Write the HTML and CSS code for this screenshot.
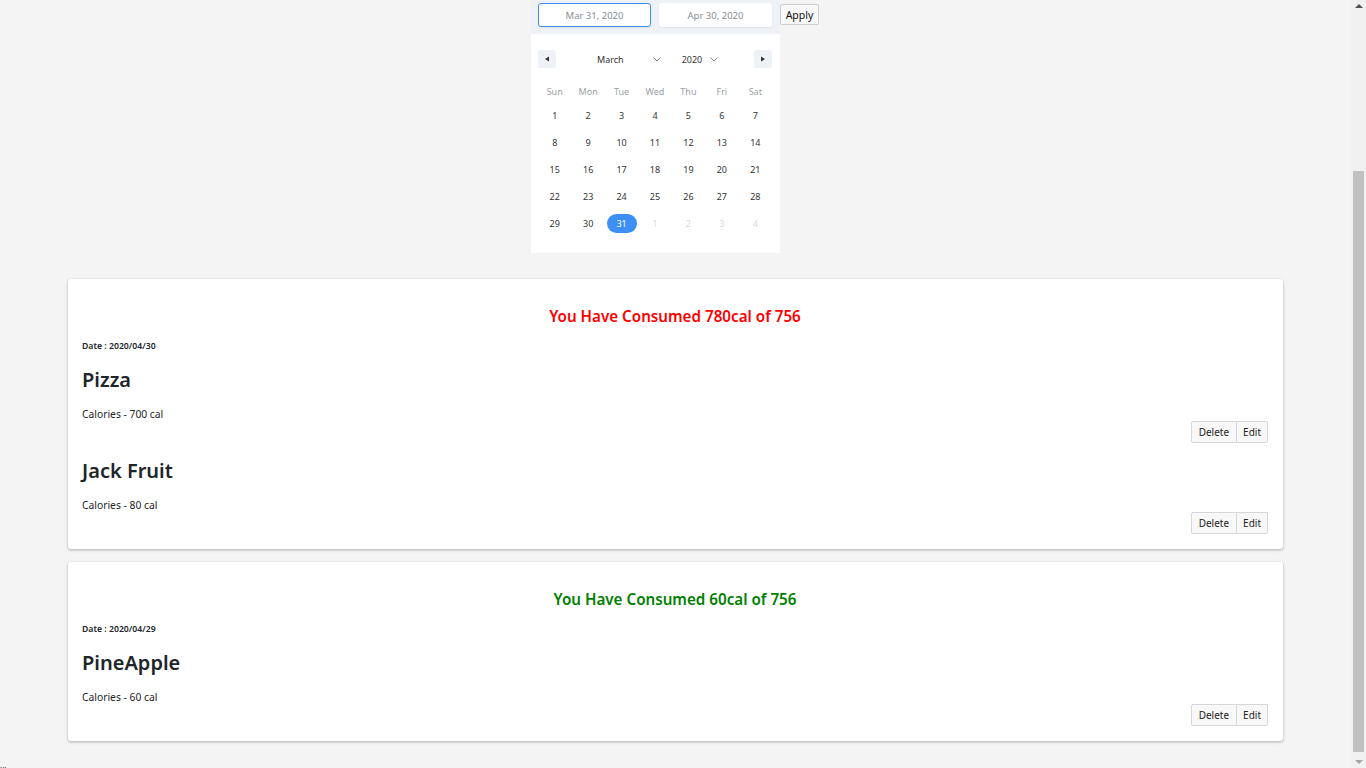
FILE: index.html
```html
<!DOCTYPE html>
<html lang="en">
<head>
<meta charset="utf-8">
<title>Calories</title>
<link rel="stylesheet" href="styles.css">
</head>
<body>
<div class="page">
  <main class="main">
    <div class="picker-row">
      <div class="picker">
        <div class="picker-inputs">
          <div class="date-input active">Mar 31, 2020</div>
          <div class="date-input">Apr 30, 2020</div>
        </div>
        <div class="calendar">
          <div class="cal-head">
            <span class="nav"><svg width="6" height="6" viewBox="0 0 6 6"><path d="M1 3L5 0.5V5.5Z" fill="#333"/></svg></span>
            <span class="sel month">March</span>
            <svg class="chev chev-m" width="8" height="5" viewBox="0 0 8 5"><path d="M0.5 0.5L4 4L7.5 0.5" fill="none" stroke="#888" stroke-width="1"/></svg>
            <span class="sel year">2020</span>
            <svg class="chev chev-y" width="8" height="5" viewBox="0 0 8 5"><path d="M0.5 0.5L4 4L7.5 0.5" fill="none" stroke="#888" stroke-width="1"/></svg>
            <span class="spacer"></span>
            <span class="nav"><svg width="6" height="6" viewBox="0 0 6 6"><path d="M5 3L1 0.5V5.5Z" fill="#333"/></svg></span>
          </div>
          <div class="cal-grid">
            <span class="wd">Sun</span><span class="wd">Mon</span><span class="wd">Tue</span><span class="wd">Wed</span><span class="wd">Thu</span><span class="wd">Fri</span><span class="wd">Sat</span>
            <span class="d">1</span><span class="d">2</span><span class="d">3</span><span class="d">4</span><span class="d">5</span><span class="d">6</span><span class="d">7</span>
            <span class="d">8</span><span class="d">9</span><span class="d">10</span><span class="d">11</span><span class="d">12</span><span class="d">13</span><span class="d">14</span>
            <span class="d">15</span><span class="d">16</span><span class="d">17</span><span class="d">18</span><span class="d">19</span><span class="d">20</span><span class="d">21</span>
            <span class="d">22</span><span class="d">23</span><span class="d">24</span><span class="d">25</span><span class="d">26</span><span class="d">27</span><span class="d">28</span>
            <span class="d">29</span><span class="d">30</span><span class="d"><span class="pill">31</span></span><span class="d off">1</span><span class="d off">2</span><span class="d off">3</span><span class="d off">4</span>
          </div>
        </div>
      </div>
      <button class="apply">Apply</button>
    </div>

    <section class="card">
      <h2 class="total over">You Have Consumed 780cal of 756</h2>
      <div class="date">Date : 2020/04/30</div>
      <div class="item">
        <h3 class="food">Pizza</h3>
        <p class="cal">Calories - 700 cal</p>
        <div class="actions"><button class="btn">Delete</button><button class="btn">Edit</button></div>
      </div>
      <div class="item">
        <h3 class="food">Jack Fruit</h3>
        <p class="cal">Calories - 80 cal</p>
        <div class="actions"><button class="btn">Delete</button><button class="btn">Edit</button></div>
      </div>
    </section>

    <section class="card">
      <h2 class="total ok">You Have Consumed 60cal of 756</h2>
      <div class="date">Date : 2020/04/29</div>
      <div class="item">
        <h3 class="food">PineApple</h3>
        <p class="cal">Calories - 60 cal</p>
        <div class="actions"><button class="btn">Delete</button><button class="btn">Edit</button></div>
      </div>
    </section>
    <div class="status">...</div>
  </main>
  <div class="scrollbar">
    <span class="arrow up"></span>
    <div class="track"><div class="thumb"></div></div>
    <span class="arrow down"></span>
  </div>
</div>
</body>
</html>
```

FILE: styles.css
```css
* { box-sizing: border-box; }
html, body { margin: 0; padding: 0; height: 768px; overflow: hidden; }
body {
  background: #f4f4f4;
  font-family: "Noto Sans", "DejaVu Sans", sans-serif;
  color: #212529;
}
.page { display: flex; height: 768px; }
.main { flex: 1; display: flex; flex-direction: column; min-width: 0; }

/* date range picker */
.picker-row { display: flex; justify-content: center; align-items: flex-start; padding-right: 1px; }
.picker { width: 249px; }
.picker-inputs {
  background: #eef1f5;
  height: 34px;
  display: flex;
  gap: 8px;
  padding: 3px 8px 0 7px;
}
.date-input {
  width: 113px;
  height: 24px;
  background: #fff;
  border-radius: 3px;
  font-size: 9.5px;
  color: #8a8f96;
  display: flex;
  align-items: center;
  justify-content: center;
  box-shadow: 0 1px 2px rgba(0,0,0,0.06);
}
.date-input.active { border: 1px solid #3d8ff5; }
.apply {
  margin-top: 4px;
  height: 21px;
  width: 39px;
  padding: 0;
  font-family: "Noto Sans", "DejaVu Sans", sans-serif;
  font-size: 10.5px;
  color: #111;
  background: #f8f8f8;
  border: 1px solid #cfcfcf;
  border-radius: 2px;
}
.calendar { background: #fff; padding: 16px 8px 16px 7px; }
.cal-head { display: flex; align-items: center; height: 18px; }
.nav {
  width: 18px; height: 18px;
  background: #eef1f5;
  border-radius: 3px;
  display: flex; align-items: center; justify-content: center;
}
.sel { font-size: 9px; color: #333; }
.month { margin-left: 41px; }
.chev-m { margin-left: 29px; }
.year { margin-left: 21px; }
.chev-y { margin-left: 8px; }
.spacer { flex: 1; }
.cal-grid {
  margin-top: 13px;
  display: grid;
  grid-template-columns: repeat(7, 1fr);
  grid-template-rows: 21px;
  grid-auto-rows: 27px;
}
.wd, .d {
  display: flex; align-items: center; justify-content: center;
  font-size: 9px;
}
.wd { color: #9aa0a6; }
.d { color: #333; }
.d.off { color: #d5d8dc; }
.pill {
  width: 30px; height: 19px;
  border-radius: 10px;
  background: #3d8ff5;
  color: #fff;
  display: flex; align-items: center; justify-content: center;
}

/* cards */
.card {
  margin: 26px 68px 0;
  background: #fff;
  border-radius: 3px;
  box-shadow: 0 1px 3px rgba(0,0,0,0.3);
  padding: 27px 15px 15px 14px;
}
.card + .card { margin-top: 13px; }
.total {
  margin: 0;
  text-align: center;
  font-size: 15.2px;
  line-height: 20px;
  font-weight: 600;
}
.total.over { color: #ff0000; }
.total.ok { color: #008000; }
.date {
  margin-top: 14px;
  font-size: 8.7px;
  line-height: 12px;
  font-weight: 600;
}
.food {
  margin: 15px 0 0;
  font-size: 20px;
  line-height: 26px;
  font-weight: 600;
}
.cal {
  margin: 14px 0 0;
  font-size: 10.3px;
  line-height: 14px;
}
.actions { display: flex; justify-content: flex-end; }
.btn {
  height: 22px;
  padding: 0 6px;
  font-family: "Noto Sans", "DejaVu Sans", sans-serif;
  font-size: 10px;
  color: #222;
  background: #f8f8f8;
  border: 1px solid #d6d6d6;
  margin: 0;
}
.btn:first-child { border-radius: 2px 0 0 2px; padding: 0 7px; }
.btn + .btn { border-left: none; border-radius: 0 2px 2px 0; }
.status {
  margin-top: auto;
  font-size: 8px;
  line-height: 10px;
  color: #333;
  height: 8px;
}

/* scrollbar */
.scrollbar {
  width: 15px;
  background: #f1f1f1;
  display: flex;
  flex-direction: column;
  align-items: center;
}
.arrow { width: 0; height: 0; border-left: 4px solid transparent; border-right: 4px solid transparent; }
.arrow.up { border-bottom: 4px solid #505050; margin: 4px 0 7px; }
.arrow.down { border-top: 4px solid #a3a3a3; margin: 6px 0 4px; }
.track { flex: 1; width: 100%; display: flex; flex-direction: column; }
.thumb { margin: 156px 2px 2px; flex: 1; background: #c1c1c1; }
```
